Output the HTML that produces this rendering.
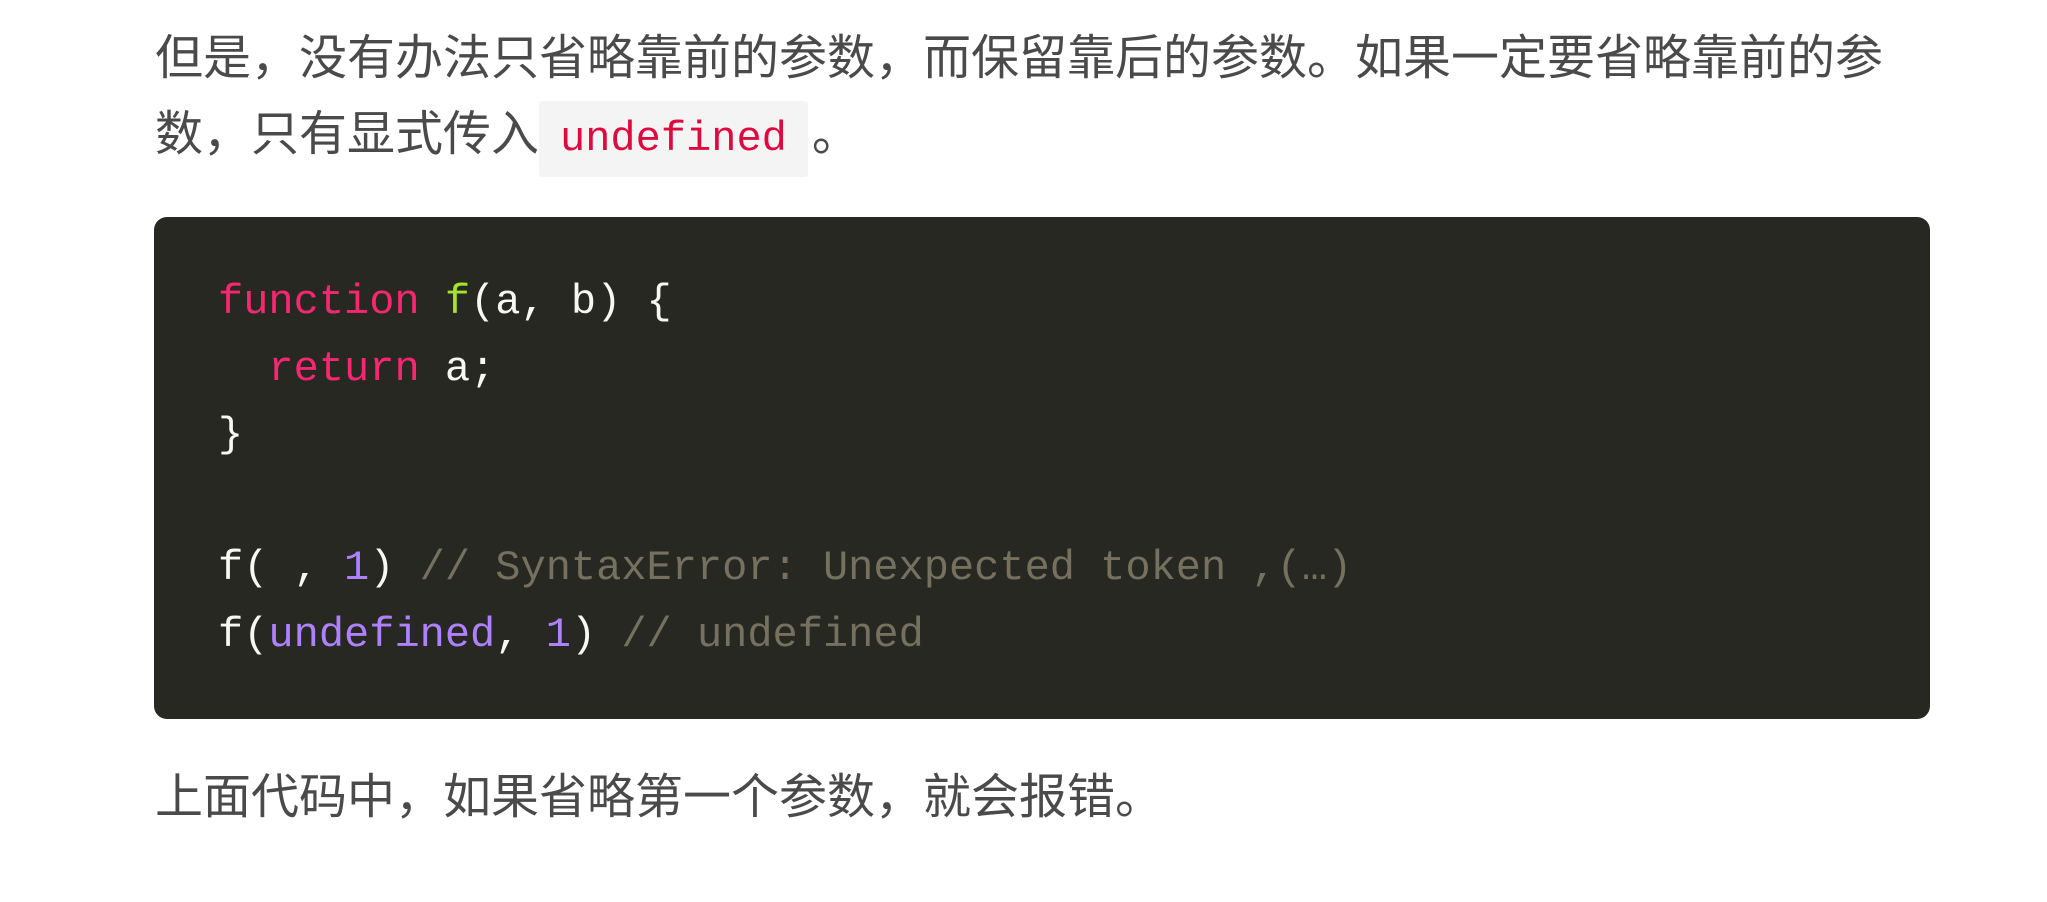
<!DOCTYPE html>
<html><head><meta charset="utf-8"><style>
html,body{margin:0;padding:0;background:#fff;width:2047px;height:902px;overflow:hidden}
.p{position:absolute;left:155px;width:1780px;font-family:"Liberation Sans","Noto Sans CJK SC",sans-serif;font-size:48px;line-height:76px;color:#4a4a4a;white-space:nowrap}
.ic{font-family:"Liberation Mono",monospace;font-size:42px;color:#dd0a3f;background:#f4f4f4;padding:14px 21px;margin:0 4px 0 0;border-radius:3px}
.code{position:absolute;left:154px;top:217px;width:1776px;height:502px;background:#272822;border-radius:13px;box-sizing:border-box;padding:52px 64px;font-family:"Liberation Mono",monospace;font-size:42px;line-height:66.6px;color:#f8f8f2;white-space:pre}
.k{color:#f92672}.g{color:#a6e22e}.n{color:#ae81ff}.c{color:#75715e}
</style></head><body>
<div class="p" style="top:21px">但是，没有办法只省略靠前的参数，而保留靠后的参数。如果一定要省略靠前的参<br>数，只有显式传入<span class="ic">undefined</span>。</div>
<div class="code"><span class="k">function</span> <span class="g">f</span>(a, b) {
  <span class="k">return</span> a;
}

f( , <span class="n">1</span>) <span class="c">// SyntaxError: Unexpected token ,(…)</span>
f(<span class="n">undefined</span>, <span class="n">1</span>) <span class="c">// undefined</span></div>
<div class="p" style="top:760px">上面代码中，如果省略第一个参数，就会报错。</div>
</body></html>
